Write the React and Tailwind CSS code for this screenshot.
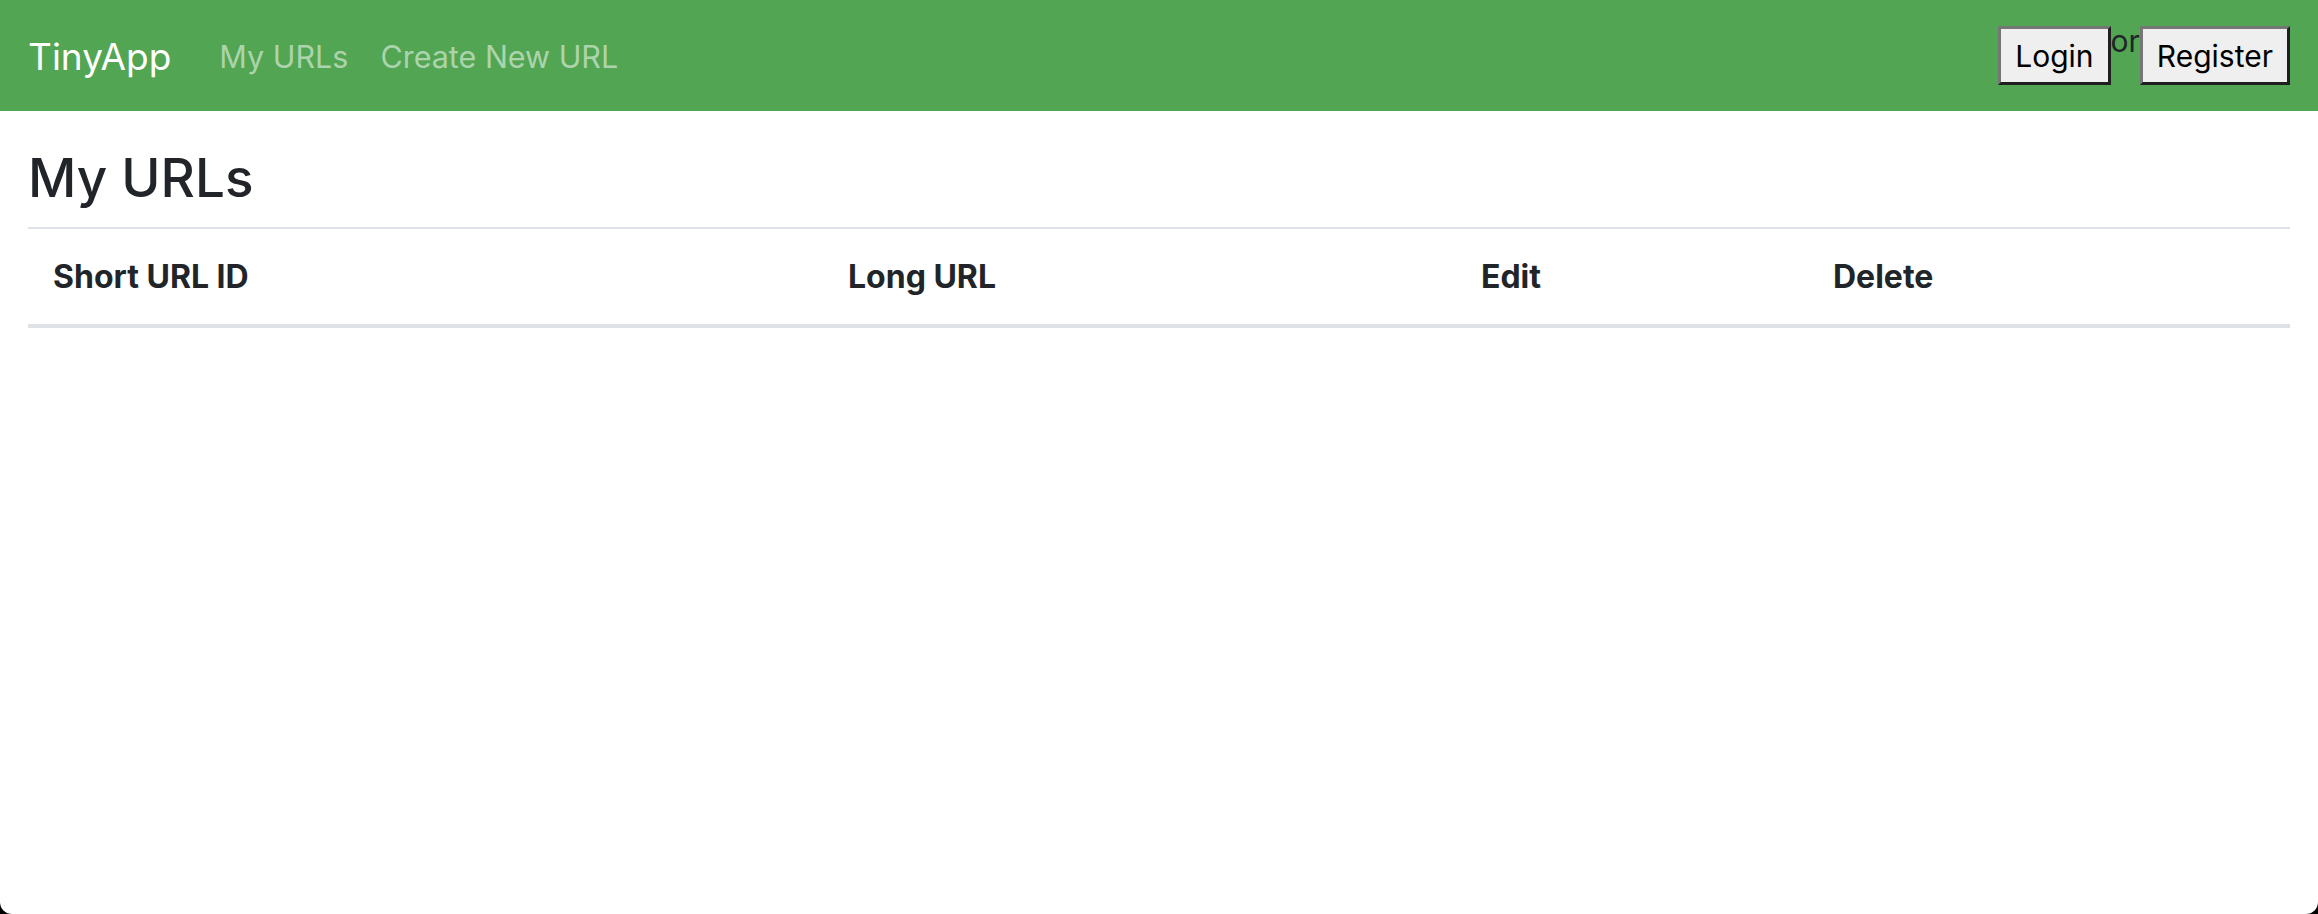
const columns = ['Short URL ID', 'Long URL', 'Edit', 'Delete'];

const NavButton = ({ children }) => (
  <button className="h-[59px] px-[14px] bg-[#efefef] text-black text-[30px] leading-none border-[3px] border-t-[#767676] border-l-[#767676] border-b-[#1f1f1f] border-r-[#1f1f1f]">
    {children}
  </button>
);

const App = () => {
  return (
    <div className="h-[914px] bg-black font-['Inter',sans-serif]">
      <div className="h-full bg-white rounded-b-[12px] overflow-hidden">
        {/* Navbar */}
        <nav className="h-[111px] bg-[#52a552] flex items-center justify-between px-[28px]">
          <div className="flex items-center pt-[2px]">
            <span className="text-white text-[37px] mr-[48px]">TinyApp</span>
            <a className="text-[#acd4ac] text-[30.5px] mr-[32px]">My URLs</a>
            <a className="text-[#acd4ac] text-[30.5px]">Create New URL</a>
          </div>
          <div className="flex items-start">
            <NavButton>Login</NavButton>
            <span className="text-[#212529] text-[30px] leading-none">or</span>
            <NavButton>Register</NavButton>
          </div>
        </nav>

        {/* Content */}
        <main className="px-[28px]">
          <h1 className="text-[#212529] text-[53px] font-medium leading-none pt-[41px] pb-[22px]">My URLs</h1>
          <div className="border-t-2 border-[#dee2e6]">
            <div className="grid grid-cols-[795px_633px_352px_1fr] h-[99px] items-center border-b-4 border-[#dee2e6]">
              {columns.map((col) => (
                <div key={col} className="px-[25px] text-[32px] font-bold text-[#212529]">
                  {col}
                </div>
              ))}
            </div>
          </div>
        </main>
      </div>
    </div>
  );
};

export default App;
